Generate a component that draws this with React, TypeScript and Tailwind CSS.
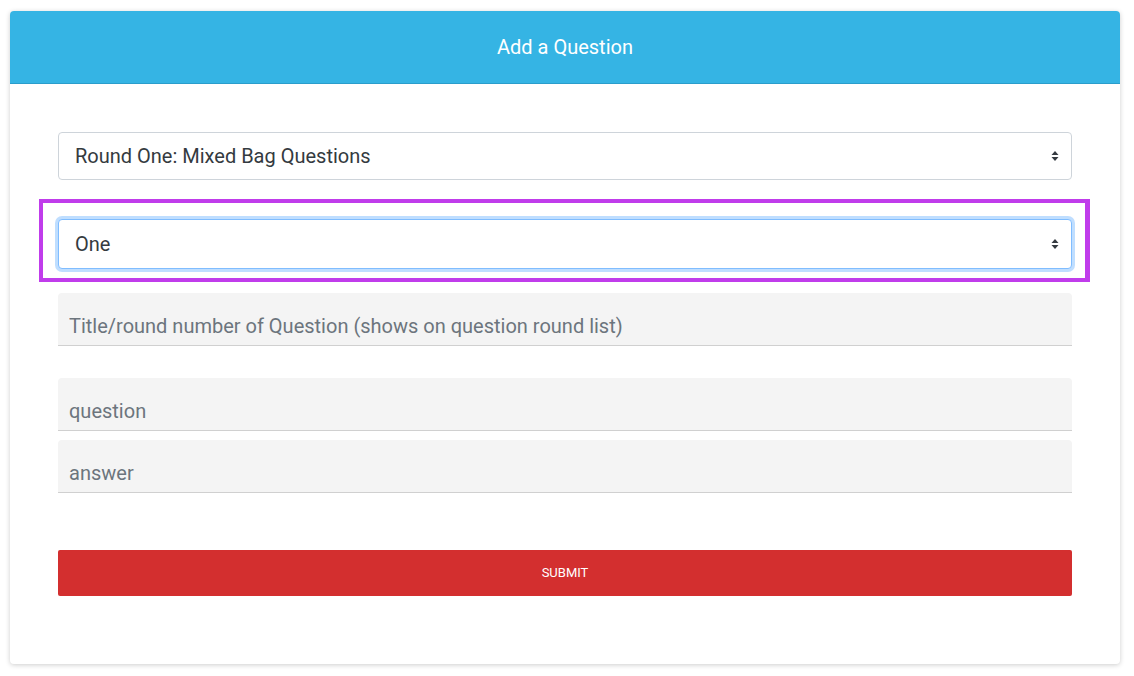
import React from "react";

const FONT = { fontFamily: "Roboto, 'Liberation Sans', Arial, sans-serif" };

function Chevrons() {
  return (
    <svg width="8" height="12" viewBox="0 0 8 12" className="shrink-0">
      <path d="M4 1 L7.5 5 L0.5 5 Z" fill="#343a40" />
      <path d="M4 11 L7.5 7 L0.5 7 Z" fill="#343a40" />
    </svg>
  );
}

function FakeSelect({ label, focused }: { label: string; focused?: boolean }) {
  return (
    <div
      className={
        "flex items-center justify-between rounded-[4px] border bg-white pl-4 pr-3 text-[20px] text-[#343a40] " +
        (focused
          ? "h-[50px] border-[#80bdff] shadow-[0_0_0_3px_rgba(0,123,255,0.25)]"
          : "h-12 border-[#ced4da]")
      }
    >
      <span>{label}</span>
      <Chevrons />
    </div>
  );
}

function Field({ placeholder }: { placeholder: string }) {
  return (
    <input
      placeholder={placeholder}
      className="block h-[53px] w-full rounded-t-[4px] border-b border-[#d0d0d0] bg-[#f4f4f4] px-[11px] pt-[13px] text-[20px] text-[#343a40] outline-none placeholder:text-[#6c757d]"
    />
  );
}

export default function App() {
  return (
    <div className="min-h-screen bg-white pl-[10px] pr-[14px] pt-[11px]" style={FONT}>
      <div className="overflow-hidden rounded-[4px] bg-white shadow-[0_1px_5px_rgba(0,0,0,0.2)]">
        <div className="flex h-[73px] items-center justify-center border-b border-[#2a9dcb] bg-[#35b4e4] text-[20px] text-white">
          Add a Question
        </div>
        <div className="relative px-12 pb-[68px] pt-12">
          <FakeSelect label="Round One: Mixed Bag Questions" />
          <div className="mt-[39px]">
            <FakeSelect label="One" focused />
          </div>
          <div className="pointer-events-none absolute left-[29px] right-[30px] top-[115px] h-[83px] border-4 border-r-[5px] border-[#c03ceb]" />
          <div className="mt-6">
            <Field placeholder="Title/round number of Question (shows on question round list)" />
          </div>
          <div className="mt-8">
            <Field placeholder="question" />
          </div>
          <div className="mt-[9px]">
            <Field placeholder="answer" />
          </div>
          <button className="mt-[57px] flex h-[46px] w-full items-center justify-center rounded-[2px] bg-[#d32f2f] text-[13px] text-white">
            SUBMIT
          </button>
        </div>
      </div>
    </div>
  );
}
